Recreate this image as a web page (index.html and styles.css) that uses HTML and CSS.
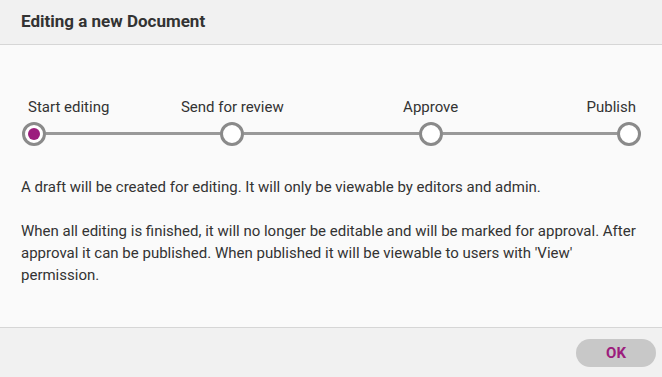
FILE: index.html
```html
<!doctype html>
<html lang="en">

<head>
	<meta charset="utf-8">
	<meta name="viewport" content="width=device-width, initial-scale=1">
	<title>Editing a new Document</title>
	<link rel="stylesheet" href="styles.css">
</head>

<body>

	<div class="dialog">

		<header class="dialog-head">
			<h1>Editing a new Document</h1>
		</header>

		<main class="dialog-body">

			<div class="stepper">

				<div class="step first">
					<span class="step-label">Start editing</span>
					<span class="dot active"></span>
				</div>
				<div class="track"></div>

				<div class="step">
					<span class="step-label">Send for review</span>
					<span class="dot"></span>
				</div>
				<div class="track"></div>

				<div class="step">
					<span class="step-label">Approve</span>
					<span class="dot"></span>
				</div>
				<div class="track"></div>

				<div class="step last">
					<span class="step-label">Publish</span>
					<span class="dot"></span>
				</div>

			</div>

			<p>A draft will be created for editing. It will only be viewable by editors and admin.</p>

			<p>When all editing is finished, it will no longer be editable and will be marked for approval. After approval it can be published. When published it will be viewable to users with 'View' permission.</p>

		</main>

		<footer class="dialog-foot">
			<button class="btn-ok">OK</button>
		</footer>

	</div>

</body>

</html>
```

FILE: styles.css
```css
* {
	box-sizing: border-box;
}

:root {
	--purple: #9c1d7d;
	--ring: #8a8a8a;
	--ink: #333;
}

html,
body {
	height: 100%;
}

body {
	background-color: #fafafa;
	color: var(--ink);
	font: 15px Roboto, "Liberation Sans", sans-serif;
	margin: 0;
}

.dialog {
	display: flex;
	flex-direction: column;
	height: 377px;
	width: 662px;
}

.dialog-head {
	align-items: center;
	background-color: #f1f1f1;
	border-bottom: 1px solid #d6d6d6;
	display: flex;
	height: 45px;
	padding: 0 21px 2px;
}

.dialog-head h1 {
	font-size: 17px;
	font-weight: bold;
	margin: 0;
}

.dialog-body {
	background-color: #fafafa;
	flex: 1;
	padding: 54px 21px 0 22px;
}

.stepper {
	display: flex;
	margin-bottom: 30px;
}

.step {
	align-items: center;
	display: flex;
	flex-direction: column;
	gap: 6px;
	width: 24px;
}

.step.first {
	align-items: flex-start;
}

.step.last {
	align-items: flex-end;
}

.step-label {
	line-height: 17px;
	white-space: nowrap;
}

.step.first .step-label {
	margin-left: 6px;
}

.step.last .step-label {
	margin-right: 5px;
}

.dot {
	align-items: center;
	background-color: #fff;
	border: 3px solid var(--ring);
	border-radius: 50%;
	display: flex;
	height: 24px;
	justify-content: center;
	width: 24px;
}

.dot.active::after {
	background-color: var(--purple);
	border-radius: 50%;
	content: "";
	height: 12px;
	width: 12px;
}

.track {
	align-self: flex-end;
	background-color: #999;
	flex: 1;
	height: 3px;
	margin-bottom: 11px;
}

p {
	line-height: 22px;
	margin: 0 0 22px;
	margin-left: -1px;
}

.dialog-foot {
	align-items: center;
	background-color: #f1f1f1;
	border-top: 1px solid #d6d6d6;
	display: flex;
	height: 50px;
	justify-content: flex-end;
	padding-right: 6px;
}

.btn-ok {
	background-color: #c8c8c8;
	border: none;
	border-radius: 14px;
	color: var(--purple);
	cursor: pointer;
	font: bold 15px Roboto, "Liberation Sans", sans-serif;
	height: 28px;
	width: 80px;
}
```
